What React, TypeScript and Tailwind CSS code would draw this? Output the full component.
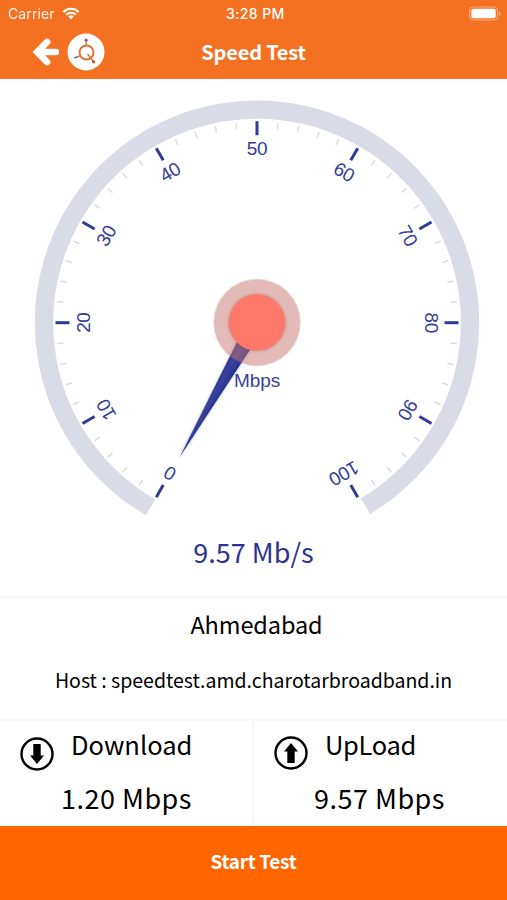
import React from "react";

const MAJOR = [0, 10, 20, 30, 40, 50, 60, 70, 80, 90, 100];
const MINOR = Array.from({ length: 51 }, (_, i) => i).filter((i) => i % 5 !== 0);

const StatusBar = () => {
  return (
    <div className="relative flex h-[27px] items-center justify-between pl-2 pr-[6px] font-['Inter',sans-serif] text-sm text-white">
      <div className="flex items-center gap-[7px]">
        <span className="text-[14px] tracking-[0.1px] opacity-90">Carrier</span>
        <svg width="18" height="13" viewBox="0 0 18 13" fill="none" stroke="white">
          <path d="M1.4 4.9a10.8 10.8 0 0 1 15.2 0" strokeWidth="2.1" />
          <path d="M4.2 7.7a6.8 6.8 0 0 1 9.6 0" strokeWidth="2" />
          <path d="M9 12.2 6.4 9.6a3.7 3.7 0 0 1 5.2 0z" fill="white" stroke="none" />
        </svg>
      </div>
      <span className="absolute left-[226px] top-1/2 -translate-y-1/2 whitespace-nowrap text-[14px] font-medium tracking-[0.4px]">
        3:28 PM
      </span>
      <svg width="33" height="15" viewBox="0 0 33 15">
        <rect x="1.5" y="1" width="28" height="13" rx="3.5" fill="none" stroke="white" strokeOpacity="0.45" />
        <rect x="3.3" y="2.8" width="24.4" height="9.4" rx="1.8" fill="white" />
        <path d="M31 5.2v4.6c1-.5 1.5-1.3 1.5-2.3s-.5-1.8-1.5-2.3z" fill="white" fillOpacity="0.5" />
      </svg>
    </div>
  );
};

const Logo = () => {
  return (
    <svg width="38" height="38" viewBox="0 0 38 38">
      <circle cx="19" cy="19" r="18.5" fill="white" />
      <g fill="none" stroke="#d9793a">
        <circle cx="19.5" cy="19.5" r="7" strokeWidth="2" />
        <path d="M19.2 8v4M14 22.5l-4 1.5M20.5 21l6 7.5" strokeWidth="1.4" />
      </g>
      <circle cx="19.2" cy="7.2" r="1.4" fill="#c4315c" />
      <circle cx="26.5" cy="28.8" r="1.7" fill="#c05a2e" />
      <path d="M7.3 25l3-1.2" stroke="#6068b5" strokeWidth="1.7" />
    </svg>
  );
};

const Navbar = () => {
  return (
    <div className="relative flex h-[52px] items-center pb-[2px] pl-8">
      <svg width="27" height="28" viewBox="0 0 27 28" fill="white">
        <path d="M0.5 14 12.6 1.8a3.3 3.3 0 0 1 4.9 4.5L13 10.700h11a3.200 3.200 0 0 1 0 6.600H13l4.500 4.400a3.300 3.300 0 0 1-4.900 4.500z" />
      </svg>
      <div className="ml-2 h-[38px]">
        <Logo />
      </div>
      <h1 className="absolute left-1/2 top-[9px] -translate-x-1/2 whitespace-nowrap text-[20px] font-bold leading-8 tracking-[-0.2px] text-white">
        Speed Test
      </h1>
    </div>
  );
};

const Gauge = () => {
  return (
    <svg className="block" width="507" height="454" viewBox="0 79 507 454">
      <defs>
        <linearGradient id="needle" gradientUnits="userSpaceOnUse" x1="212" y1="385" x2="224" y2="392">
          <stop offset="0" stopColor="#28328c" />
          <stop offset="0.45" stopColor="#3a429c" />
          <stop offset="1" stopColor="#1f3093" />
        </linearGradient>
        <filter id="glow" x="-30%" y="-30%" width="160%" height="160%">
          <feDropShadow dx="0" dy="0" stdDeviation="1.6" floodColor="#554" floodOpacity="0.45" />
        </filter>
      </defs>
      <g transform="translate(257 322.7)">
        <path d="M-106.5 184.46A213 213 0 1 1 108.4 183.35" fill="none" stroke="#d9dce7" strokeWidth="18.3" />
        {/* TICKS */}
        {MINOR.map((i) => (
          <path key={i} d="M0-201V-194.5" stroke="#dcdcdc" strokeWidth="1.5" transform={`rotate(${-150 + i * 6})`} />
        ))}
        {MAJOR.map((value) => (
          <g key={value} transform={`rotate(${-150 + value * 3})`}>
            <path d="M0-201.5V-187.5" stroke="#2f3a92" strokeWidth="3" />
            <text
              y="-167.5"
              textAnchor="middle"
              className="fill-[#343c98] font-['Liberation_Sans',Arial,sans-serif] text-[19px] tracking-[-0.4px]"
            >
              {value}
            </text>
          </g>
        ))}
      </g>
      <text
        x="257"
        y="387"
        textAnchor="middle"
        className="fill-[#3b409c] font-['Liberation_Sans',Arial,sans-serif] text-[19px] tracking-[-0.1px]"
      >
        Mbps
      </text>
      {/* NEEDLE */}
      <path d="M179.3 457.7 249 318 265 327z" fill="url(#needle)" filter="url(#glow)" />
      <circle cx="257" cy="322.5" r="43" fill="#c87570" fillOpacity="0.5" />
      <circle cx="257" cy="322.5" r="43.5" fill="none" stroke="#998" strokeOpacity="0.25" />
      <circle cx="257" cy="322.5" r="28.3" fill="#ff796a" filter="url(#glow)" />
    </svg>
  );
};

const CircleArrow = ({ up = false }: { up?: boolean }) => {
  return (
    <svg width="34" height="34" viewBox="0 0 34 34" className={up ? "rotate-180" : ""}>
      <circle cx="17" cy="17" r="15.5" fill="none" stroke="#000" strokeWidth="2.4" />
      <path d="M13.3 7h7.4v11.5h3.3L17 27l-7-8.5h3.3z" />
    </svg>
  );
};

const App = () => {
  return (
    <div className="flex h-[900px] w-[507px] flex-col overflow-hidden bg-white font-['Noto_Sans_CJK_SC',sans-serif] text-black">
      <header className="h-[79px] bg-[#f37121]">
        <StatusBar />
        <Navbar />
      </header>
      {/* GAUGE */}
      <Gauge />
      <p className="h-[62px] text-center text-[27px] leading-[38px] text-[#2e3192]">9.57 Mb/s</p>
      {/* SERVER */}
      <section className="h-[124px] border-t-4 border-[#f8f8f8] text-center">
        <h2 className="mt-[5px] pl-[6px] text-[23.5px] leading-[40px] tracking-[-0.1px]">Ahmedabad</h2>
        <p className="mt-[18px] text-[19.5px] leading-[36px]">Host : speedtest.amd.charotarbroadband.in</p>
      </section>
      {/* RESULTS */}
      <section className="grid h-[107px] grid-cols-[254px_253px] border-t-2 border-[#f8f8f8]">
        <div className="border-r-2 border-[#f8f8f8]">
          <div className="flex">
            <div className="ml-5 mt-4">
              <CircleArrow />
            </div>
            <p className="ml-[17px] mt-[3px] text-[25.5px] leading-[40px]">Download</p>
          </div>
          <p className="ml-[61px] mt-[7px] text-[27px] leading-[40px] tracking-[0.5px]">1.20 Mbps</p>
        </div>
        <div>
          <div className="flex">
            <div className="ml-5 mt-[15px]">
              <CircleArrow up />
            </div>
            <p className="ml-[17px] mt-[3px] text-[25.5px] leading-[40px] tracking-[-0.3px]">UpLoad</p>
          </div>
          <p className="ml-[60px] mt-[8px] text-[27px] leading-[40px] tracking-[0.5px]">9.57 Mbps</p>
        </div>
      </section>
      <button className="h-[74px] bg-[#ff6600] pb-[3px] text-[19px] font-bold tracking-[-0.3px] text-white">
        Start Test
      </button>
    </div>
  );
};

export default App;
